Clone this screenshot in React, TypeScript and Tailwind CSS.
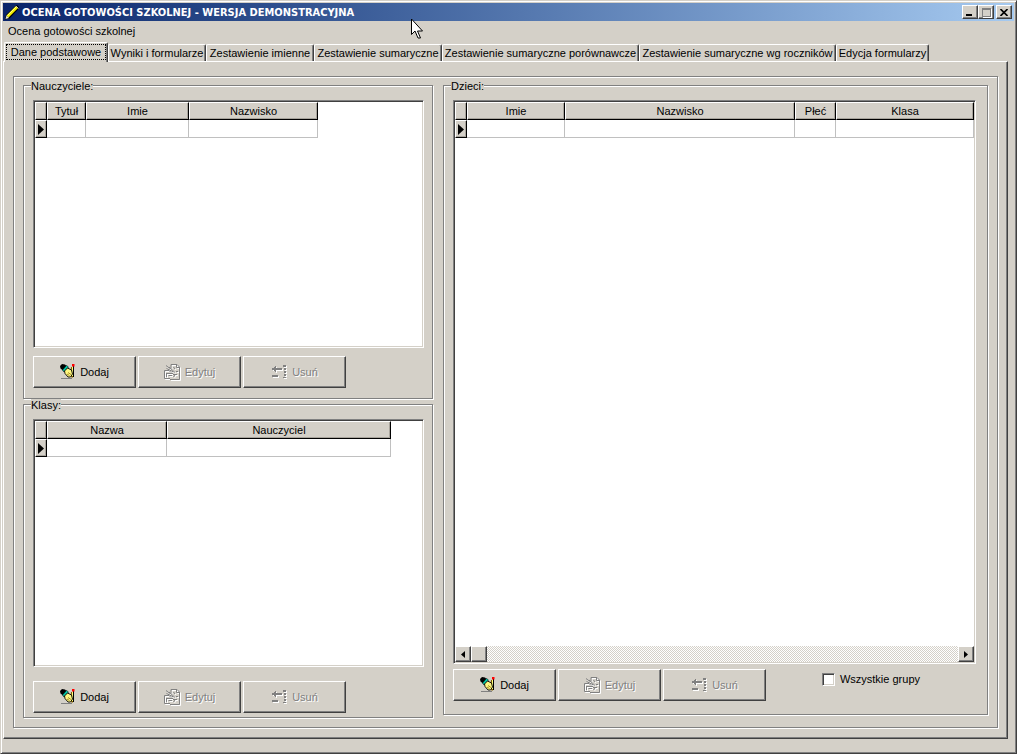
import React, { useState } from 'react';
import { clsx } from 'clsx';

interface Column {
  label: string;
  width?: string;
}

interface DataGridProps {
  name: string;
  columns: Column[];
  fluid?: boolean;
  scrollbar?: boolean;
}

const raised =
  'border border-t-white border-l-white border-r-[#404040] border-b-[#404040] bg-[#d4d0c8] shadow-[inset_-1px_-1px_0_#808080]';

const sunken =
  'border border-t-[#808080] border-l-[#808080] border-r-white border-b-white shadow-[inset_1px_1px_0_#404040,inset_-1px_-1px_0_#d4d0c8]';

const tabs = [
  { label: 'Dane podstawowe', width: 'w-[104px]' },
  { label: 'Wyniki i formularze', width: 'w-[98px]' },
  { label: 'Zestawienie imienne', width: 'w-[108px]' },
  { label: 'Zestawienie sumaryczne', width: 'w-[128px]' },
  { label: 'Zestawienie sumaryczne porównawcze', width: 'w-[197px]' },
  { label: 'Zestawienie sumaryczne wg roczników', width: 'w-[197px]' },
  { label: 'Edycja formularzy', width: 'w-[93px]' },
];

const teacherColumns: Column[] = [
  { label: 'Tytuł', width: 'w-[39px]' },
  { label: 'Imie', width: 'w-[103px]' },
  { label: 'Nazwisko', width: 'w-[129px]' },
];

const classColumns: Column[] = [
  { label: 'Nazwa', width: 'w-[120px]' },
  { label: 'Nauczyciel', width: 'w-[224px]' },
];

const childColumns: Column[] = [
  { label: 'Imie', width: 'w-[98px]' },
  { label: 'Nazwisko', width: 'w-[230px]' },
  { label: 'Płeć', width: 'w-[41px]' },
  { label: 'Klasa' },
];

const PencilIcon = () => (
  <svg width="16" height="16" viewBox="0 0 16 16" aria-hidden="true">
    <path d="M0 15.500l1-4.500L11 1.500c1-1 4 1.500 3 3L4.500 14.500z" fill="#000" />
    <path d="M2.500 12.500L12 3" stroke="#f4f000" strokeWidth="3" />
    <path d="M2.500 11.500L11 3" stroke="#ffff90" strokeWidth="1" />
    <path d="M.5 15l1-3.500L4 14z" fill="#e8e8d0" />
    <path d="M11 2l2.500 2.500" stroke="#c0c0c0" strokeWidth="1" />
  </svg>
);

const AddIcon = () => (
  <svg width="16" height="16" viewBox="0 0 16 16" aria-hidden="true">
    <path d="M1 14.500h11" stroke="#808080" />
    <path d="M11 3h3v9l-2 2-2-3z" fill="#806000" />
    <path d="M12 3h1v9h-1z" fill="#ffff80" />
    <path d="M13.500 1.500v11.500" stroke="#000" />
    <path d="M12 0h2.500v2.500H12z" fill="#ff0000" />
    <path d="M0 2l2-2 3 .5L7 2.500 3 6.500.5 4.500z" fill="#000" />
    <path d="M6.500 1.500l2 1.500L4 8 2.500 6z" fill="#00d0b0" stroke="#000" strokeWidth=".6" />
    <path d="M7.500 4l4 2 1 4-2 3H8L5 9.500 4.500 7z" fill="#fff880" stroke="#000" strokeWidth=".9" />
    <path d="M8 8.500l3 2M7 10l2.500 1.500" stroke="#806000" strokeWidth=".7" />
  </svg>
);

const editLines =
  'M7 4.500V.5h6l2.500 2.500v12.500H6M12.500.5v3h3M2 1.500l4 3M2.500 4.500l7 3.500M5 3l6 5.500M9.500 3L11 5M.5 6.500v8H6M.5 6.500H5l2 2M3 9.500h6M4.500 11.500H8M9 10.500h4M9.500 13l1.500-2M12 7.500h2M2.500 9v4';

const EditIcon = () => (
  <svg width="17" height="17" viewBox="0 0 17 17" fill="none" aria-hidden="true">
    <path d={editLines} stroke="#fff" transform="translate(1 1)" />
    <path d={editLines} stroke="#808080" />
  </svg>
);

const deleteShape =
  'M1 4h2V3h1V2h1v2h6v2H5v2H4V7H3V6H1zM1 11h6v2H1zM12 1h3v2h-3zM13 4h2v2h-2zM13 7h2v2h-2zM13 10h2v2h-2zM12 13h3v1h-3z';

const DeleteIcon = () => (
  <svg width="17" height="17" viewBox="0 0 17 17" aria-hidden="true">
    <path d={deleteShape} fill="#fff" transform="translate(1 1)" />
    <path d={deleteShape} fill="#808080" />
  </svg>
);

const Cursor = () => (
  <svg
    className="pointer-events-none absolute left-[410px] top-[17px]"
    width="13"
    height="21"
    viewBox="0 0 13 21"
    aria-hidden="true"
  >
    <path d="M.5 1v15.500l3.500-3.500 3 7h2.500l-3-7h5z" fill="#fff" stroke="#000" />
  </svg>
);

const TitleBar = () => (
  <header className="flex h-[18px] items-center bg-gradient-to-r from-[#0a246a] to-[#a6caf0] pl-[2px] pr-[2px]">
    <PencilIcon />
    <h1 className="ml-px flex-1 whitespace-nowrap font-['DejaVu_Sans_Condensed','DejaVu_Sans',sans-serif] text-[11px] font-bold text-white">
      OCENA GOTOWOŚCI SZKOLNEJ - WERSJA DEMONSTRACYJNA
    </h1>
    <button aria-label="Minimalizuj" className={clsx(raised, 'flex h-[14px] w-4 items-end pb-[2px] pl-[3px]')}>
      <span className="h-[2px] w-[6px] bg-black" />
    </button>
    <button aria-label="Maksymalizuj" disabled className={clsx(raised, 'flex h-[14px] w-4 items-center justify-center')}>
      <span className="h-[9px] w-[9px] border border-t-2 border-[#808080] shadow-[1px_1px_0_#fff]" />
    </button>
    <button aria-label="Zamknij" className={clsx(raised, 'ml-[2px] flex h-[14px] w-4 items-center justify-center')}>
      <svg width="8" height="7" viewBox="0 0 8 7" aria-hidden="true">
        <path d="M.500 0l7 7M7.500 0l-7 7" stroke="#000" strokeWidth="1.600" />
      </svg>
    </button>
  </header>
);

const DataGrid = ({ name, columns, fluid = false, scrollbar = false }: DataGridProps) => {
  return (
    <div className={clsx(sunken, 'flex flex-1 flex-col bg-white p-px')}>
      <div className="flex-1">
        <table
          aria-label={name}
          className={clsx('table-fixed border-separate border-spacing-0', fluid ? 'w-full' : 'w-0')}
        >
          <colgroup>
            <col className="w-3" />
            {columns.map((col) => (
              <col key={col.label} className={col.width} />
            ))}
          </colgroup>
          <thead>
            <tr className="h-[18px]">
              {['', ...columns.map((col) => col.label)].map((label) => (
                <th
                  key={label}
                  className="h-[18px] border border-b-black border-l-white border-r-black border-t-white bg-[#d4d0c8] p-0 text-center font-normal leading-4 shadow-[inset_-1px_-1px_0_#a8a49c]"
                >
                  {label}
                </th>
              ))}
            </tr>
          </thead>
          <tbody>
            <tr>
              <td className="h-[18px] border border-b-black border-l-white border-r-black border-t-white bg-[#d4d0c8] p-0 shadow-[inset_-1px_-1px_0_#a8a49c]">
                <svg className="ml-[2px]" width="6" height="11" viewBox="0 0 6 11" aria-hidden="true">
                  <path d="M0 0l6 5.500L0 11z" />
                </svg>
              </td>
              {columns.map((col) => (
                <td key={col.label} className="h-[18px] border-b border-r border-[#c0c0c0] p-0" />
              ))}
            </tr>
          </tbody>
        </table>
      </div>
      {scrollbar && (
        <div className="flex h-4 bg-[repeating-conic-gradient(#d4d0c8_0_25%,#fff_0_50%)] bg-[length:2px_2px]">
          <button aria-label="Przewiń w lewo" className={clsx(raised, 'flex w-4 items-center justify-center')}>
            <svg width="4" height="7" viewBox="0 0 4 7" aria-hidden="true">
              <path d="M4 0v7L0 3.500z" />
            </svg>
          </button>
          <div className={clsx(raised, 'w-4')} />
          <button aria-label="Przewiń w prawo" className={clsx(raised, 'ml-auto flex w-4 items-center justify-center')}>
            <svg width="4" height="7" viewBox="0 0 4 7" aria-hidden="true">
              <path d="M0 0v7l4-3.500z" />
            </svg>
          </button>
        </div>
      )}
    </div>
  );
};

const ActionButton = ({
  icon,
  label,
  disabled = false,
}: {
  icon: React.ReactNode;
  label: string;
  disabled?: boolean;
}) => (
  <button
    disabled={disabled}
    className={clsx(
      raised,
      'flex h-8 w-[103px] items-center justify-center gap-1',
      disabled && 'text-[#808080] [text-shadow:1px_1px_0_#fff]'
    )}
  >
    {icon}
    <span>{label}</span>
  </button>
);

const ActionButtons = () => (
  <div className="flex gap-[2px]">
    <ActionButton icon={<AddIcon />} label="Dodaj" />
    <ActionButton icon={<EditIcon />} label="Edytuj" disabled />
    <ActionButton icon={<DeleteIcon />} label="Usuń" disabled />
  </div>
);

const Group = ({
  title,
  className,
  children,
}: {
  title: string;
  className?: string;
  children: React.ReactNode;
}) => (
  <fieldset
    className={clsx(
      'flex min-w-0 flex-1 flex-col border border-[#808080] pl-[9px] pt-[9px] shadow-[inset_1px_1px_0_#fff,1px_1px_0_#fff]',
      className
    )}
  >
    <legend className="-ml-[2px] h-[11px] bg-[#d4d0c8] leading-[13px]">{title}</legend>
    {children}
  </fieldset>
);

export default function App() {
  const [active, setActive] = useState(0);
  const [allGroups, setAllGroups] = useState(false);

  return (
    <div className="relative flex min-h-screen flex-col border border-b-[#404040] border-l-[#d4d0c8] border-r-[#404040] border-t-[#d4d0c8] bg-[#d4d0c8] p-[2px] font-['Liberation_Sans',Arial,sans-serif] text-[11px] leading-[13px] text-black shadow-[inset_1px_1px_0_#fff,inset_-1px_-1px_0_#808080]">
      <TitleBar />

      <nav className="flex h-[21px] items-center px-[5px]">
        <button>Ocena gotowości szkolnej</button>
      </nav>

      <div role="tablist" className="flex h-[19px] items-end pl-px">
        {tabs.map((tab, i) => (
          <button
            key={tab.label}
            role="tab"
            aria-selected={active === i}
            onClick={() => setActive(i)}
            className={clsx(
              'flex shrink-0 items-center justify-center whitespace-nowrap rounded-t-[2px] border-l border-r border-t border-l-white border-r-[#404040] border-t-white bg-[#d4d0c8] shadow-[inset_-1px_0_0_#808080]',
              tab.width,
              active === i ? 'z-10 -mb-px h-5 pb-px' : 'h-[17px]'
            )}
          >
            {active === i ? (
              <span className="mx-px flex h-4 w-full items-center justify-center border border-dotted border-black">
                {tab.label}
              </span>
            ) : (
              tab.label
            )}
          </button>
        ))}
      </div>

      <main className="mb-3 mr-[6px] flex flex-1 flex-col border border-b-[#404040] border-l-white border-r-[#404040] border-t-white pb-[10px] pl-[9px] pr-[9px] pt-[14px] shadow-[inset_-1px_-1px_0_#808080]">
        <div className="flex flex-1 gap-[10px] border border-[#808080] pb-[9px] pl-[9px] pr-[9px] pt-[3px] shadow-[inset_1px_1px_0_#fff,1px_1px_0_#fff]">
          <div className="grid w-[410px] shrink-0 grid-rows-2">
            <Group title="Nauczyciele:" className="gap-2 pb-[10px] pr-2">
              <DataGrid name="Nauczyciele" columns={teacherColumns} />
              <ActionButtons />
            </Group>
            <Group title="Klasy:" className="gap-[14px] pb-1 pr-2">
              <DataGrid name="Klasy" columns={classColumns} />
              <ActionButtons />
            </Group>
          </div>

          <Group title="Dzieci:" className="mb-[3px] gap-[5px] pb-[13px] pr-[11px]">
            <DataGrid name="Dzieci" columns={childColumns} fluid scrollbar />
            <div className="flex items-start justify-between">
              <ActionButtons />
              <label className="mr-14 mt-1 flex items-center gap-[5px]">
                <input
                  type="checkbox"
                  checked={allGroups}
                  onChange={(e) => setAllGroups(e.target.checked)}
                  className={clsx(sunken, 'h-[13px] w-[13px] appearance-none bg-white checked:bg-black')}
                />
                Wszystkie grupy
              </label>
            </div>
          </Group>
        </div>
      </main>

      <Cursor />
    </div>
  );
}
